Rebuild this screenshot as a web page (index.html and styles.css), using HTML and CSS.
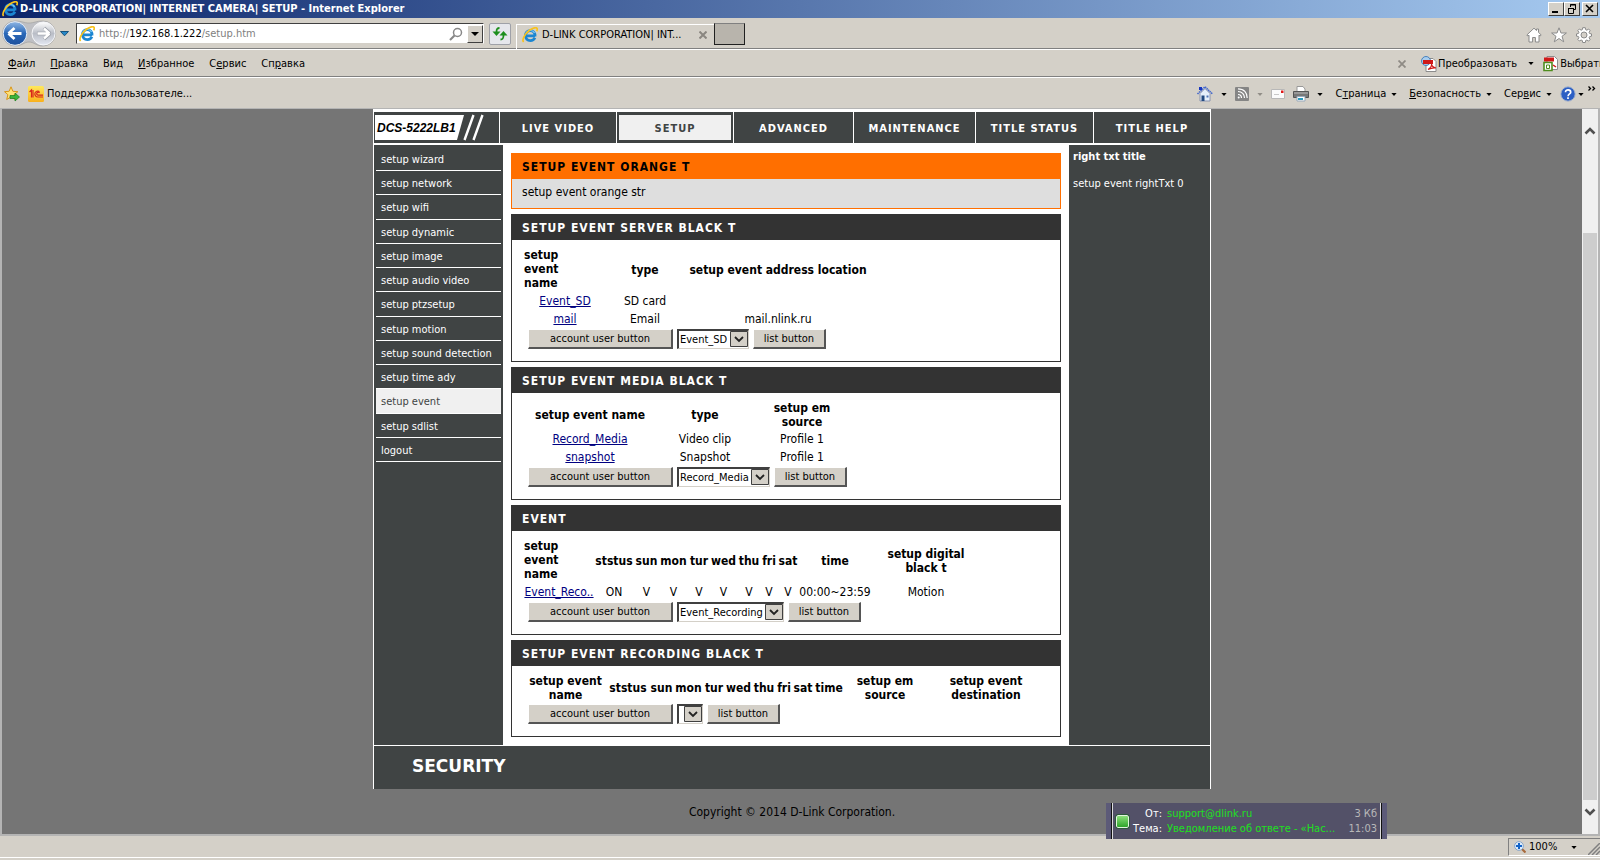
FILE: index.html
```html
<!DOCTYPE html>
<html lang="ru">
<head>
<meta charset="utf-8">
<title>D-LINK CORPORATION| INTERNET CAMERA| SETUP</title>
<link rel="stylesheet" href="styles.css">
</head>
<body>
<svg class="defs" aria-hidden="true">
  <linearGradient id="blue" x1="0" y1="0" x2="0" y2="1"><stop offset="0" stop-color="#8fb6e4"/><stop offset=".5" stop-color="#2a68b8"/><stop offset="1" stop-color="#1c4f9c"/></linearGradient>
  <linearGradient id="silver" x1="0" y1="0" x2="0" y2="1"><stop offset="0" stop-color="#ffffff"/><stop offset=".5" stop-color="#b9bdc6"/><stop offset="1" stop-color="#e4e8f2"/></linearGradient>
  <linearGradient id="gold" x1="0" y1="0" x2="0" y2="1"><stop offset="0" stop-color="#ffe85c"/><stop offset="1" stop-color="#f9b01c"/></linearGradient>
  <symbol id="ie" viewBox="0 0 16 16">
    <path d="M3.600 8.800h9.400M13 9.500C13.300 5.500 11.200 3.600 8.300 3.600 5.400 3.600 3.500 5.600 3.500 8.600c0 3 2 5 4.800 5 2.200 0 3.800-.9 4.600-2.800" fill="none" stroke="#1c86d1" stroke-width="2.800"/>
    <path d="M3.600 7.200C4.400 4.600 6.200 3.500 8.300 3.500c2 0 3.500.9 4.200 2.500" fill="none" stroke="#7cc8f4" stroke-width="1.200"/>
    <path d="M1.600 15C-.5 12.800 3 6.600 7.500 3.300 11 .8 14.600 0 15.200 1.600c.3.800 0 1.700-.6 2.700" fill="none" stroke="#f8c21c" stroke-width="1.700"/>
  </symbol>
  <symbol id="drop" viewBox="0 0 7 4"><path d="M0 0h7L3.500 4z" fill="currentColor"/></symbol>
</svg>

<div class="window">
  <header class="titlebar">
    <svg class="i16"><use href="#ie"/></svg>
    <h1 class="window-title">D-LINK CORPORATION| INTERNET CAMERA| SETUP - Internet Explorer</h1>
    <div class="window-controls">
      <button type="button" aria-label="Свернуть"><svg viewBox="0 0 12 10"><path d="M2 8h6" stroke="#000" stroke-width="2"/></svg></button>
      <button type="button" aria-label="Восстановить"><svg viewBox="0 0 12 10"><path d="M4.500 3V.5h5v5H7M4 1h6M2.500 4.500h5v5h-5zM2 4.500h6" fill="none" stroke="#000"/></svg></button>
      <button type="button" class="close" aria-label="Закрыть"><svg viewBox="0 0 12 10"><path d="M2 1l7 7M9 1L2 8" stroke="#000" stroke-width="1.600"/></svg></button>
    </div>
  </header>

  <div class="navbar">
    <div class="history">
      <svg viewBox="0 0 54 28" aria-hidden="true">
        <path d="M13 1C20 1 22 3 27 3s7-2 14-2a12 12 0 0 1 0 25c-7 0-9-4-14-4s-7 4-14 4A12 12 0 0 1 13 1z" fill="#bfc0c4" stroke="#9a9a9a" stroke-width=".6"/>
        <circle cx="13" cy="13.500" r="11.800" fill="url(#blue)" stroke="#e6edf6"/>
        <path d="M6.500 13.500L12.500 8M6.500 13.500l6 5.500M7 13.500h12.500" stroke="#fff" stroke-width="2.800" fill="none"/>
        <circle cx="41.500" cy="13.500" r="11.500" fill="url(#silver)" stroke="#f4f5f8"/>
        <path d="M48 13.500L42 8M48 13.500l-6 5.500M47.500 13.500H35" stroke="#989ca5" stroke-width="3.600" fill="none"/>
        <path d="M47.500 13.500L42 8.500M47.500 13.500l-5.500 5M47 13.500H35.500" stroke="#fff" stroke-width="2.400" fill="none"/>
      </svg>
      <svg class="history-drop" viewBox="0 0 10 7" aria-hidden="true"><path d="M.5 1.500h8L4.500 5.800z" fill="#2688c8" stroke="#17547e"/></svg>
    </div>
    <div class="address">
      <svg class="i16"><use href="#ie"/></svg>
      <div class="url">http://<b>192.168.1.222</b>/setup.htm</div>
      <svg class="search" viewBox="0 0 14 14" aria-hidden="true"><circle cx="8.500" cy="5.500" r="4" fill="none" stroke="#888" stroke-width="1.500"/><path d="M5.500 8.500L1 13" stroke="#888" stroke-width="2.200"/></svg>
      <button type="button" class="address-drop" aria-label="Адреса"><svg viewBox="0 0 8 4"><path d="M0 0h8L4 4z"/></svg></button>
    </div>
    <button type="button" class="refresh" aria-label="Обновить"><svg viewBox="0 0 16 16"><path d="M.5 5.500h8L4.500 10z" fill="#1d8f1d"/><path d="M7.500 2C5 2 4.500 3 4.500 6" fill="none" stroke="#1d8f1d" stroke-width="1.800"/><path d="M7.500 9.500h8L11.500 5z" fill="#1d8f1d"/><path d="M8.500 13.500c2.500 0 3-1 3-4.500" fill="none" stroke="#1d8f1d" stroke-width="1.800"/></svg></button>
    <div class="tab">
      <svg class="i16"><use href="#ie"/></svg>
      <span class="tab-name">D-LINK CORPORATION| INT...</span>
      <svg class="tab-close" viewBox="0 0 8 8" aria-hidden="true"><path d="M.5.5l7 7M7.500.5l-7 7" stroke="#8a8680" stroke-width="2"/></svg>
    </div>
    <button type="button" class="new-tab" aria-label="Новая вкладка"></button>
    <div class="tools">
      <svg viewBox="0 0 16 16" aria-hidden="true"><path d="M8 1.200L.8 8l1 1L3 8.200V15h3.600v-4.500h2.800V15H13V8.200l1.200.8 1-1L12.500 5.300V2h-2v1.500z" fill="#fff" stroke="#8a8a8a"/></svg>
      <svg viewBox="0 0 16 16" aria-hidden="true"><path d="M8 .8l2 5.200h5.400L11 9.300l1.700 5.500L8 11.500l-4.700 3.300L5 9.300.6 6H6z" fill="#fff" stroke="#8a8a8a"/></svg>
      <svg viewBox="0 0 16 16" aria-hidden="true"><path d="M6.700.7h2.600l.4 2 1.200.5L12.600 2l1.500 1.600-1 1.700.5 1.200 1.900.4v2.300l-1.900.4-.5 1.200 1 1.700-1.500 1.600-1.700-1.100-1.200.5-.4 2H6.700l-.4-2-1.200-.5L3.400 14l-1.600-1.600 1.100-1.700-.5-1.200-1.900-.4V6.900l1.900-.4.5-1.200-1.100-1.700L3.400 2l1.700 1.200 1.200-.5z" fill="#fff" stroke="#8a8a8a"/><circle cx="8" cy="8" r="3" fill="#d4d0c8" stroke="#8a8a8a"/></svg>
    </div>
  </div>

  <div class="menubar">
    <nav class="menus">
      <a href="#"><u>Ф</u>айл</a><a href="#"><u>П</u>равка</a><a href="#">Ви<u>д</u></a><a href="#"><u>И</u>збранное</a><a href="#">С<u>е</u>рвис</a><a href="#">Сп<u>р</u>авка</a>
    </nav>
    <div class="pdf-tools">
      <svg class="pdf-close" viewBox="0 0 8 8" aria-hidden="true"><path d="M.5.5l7 7M7.500.5l-7 7" stroke="#8f8b85" stroke-width="1.800"/></svg>
      <a href="#"><svg class="i16" viewBox="0 0 16 16"><path d="M5 2.500h7l3 3v10H5z" fill="#fff" stroke="#8c8c8c"/><circle cx="5" cy="5" r="4.500" fill="#a8cdee" stroke="#4880bb"/><path d="M2 4h10v4H2z" fill="#d01818"/><path d="M7 13.500c3-2 4-4 3.500-6 0 3 2 4 4.500 4.500-3-.5-5 0-8 1.500z" stroke="#d01818" stroke-width="1.200" fill="none"/></svg>Преобразовать</a>
      <svg class="drop"><use href="#drop"/></svg>
      <a href="#" class="pick"><svg class="i16" viewBox="0 0 16 16"><path d="M4 .5h7.500l3 3v10H4z" fill="#fff" stroke="#8c8c8c"/><path d="M1 1.500h10v4H1z" fill="#d01818"/><path d="M1 6.500h8v8H1z" fill="#fff" stroke="#4f8d1e" stroke-width="1.600"/><path d="M3.500 9h3v3.500h-3z" fill="#fff" stroke="#4f8d1e"/><path d="M10 9l3 2" stroke="#d01818" stroke-width="1.500"/></svg>Выбрать</a>
    </div>
  </div>

  <div class="commandbar">
    <div class="favorites">
      <svg class="i16" viewBox="0 0 16 16" aria-hidden="true"><path d="M7 .8l1.900 4.500 5 .4-3.800 3 1.200 4.800L7 11l-4.300 2.500 1.200-4.800-3.400-3 4.600-.4z" fill="#ffe27a" stroke="#d99518"/><path d="M6 9.500h5V7l4.500 4-4.500 4v-2.500H6z" fill="#3cb43c" stroke="#17801b" stroke-width=".7"/></svg>
      <a href="#"><svg class="i16" viewBox="0 0 16 16"><rect width="16" height="16" rx="1.500" fill="url(#gold)"/><path d="M1.500 6l2-2v7.500M5 11.500V4M11.500 5.500a3 3 0 1 0-1.500 5.500h5M11.500 7A1.500 1.500 0 1 0 10 9.200h5" fill="none" stroke="#d8261c" stroke-width="1.200"/></svg>Поддержка пользователе...</a>
    </div>
    <div class="commands">
      <svg class="i16" viewBox="0 0 16 16" aria-hidden="true"><path d="M3 7.500V15h10V7.500L8 2.500z" fill="#e6f0fb" stroke="#8a94b0"/><path d="M.5 8L8 .8 15.500 8" fill="none" stroke="#4267cc" stroke-width="1.600" stroke-dasharray="1.500 .6"/><path d="M2 1h3v3H2z" fill="#1736c0"/><path d="M4.500 9.500h3V15h-3z" fill="#234a80"/><path d="M9.500 9.500h2v2h-2z" fill="#4e74b4"/></svg>
      <svg class="drop"><use href="#drop"/></svg>
      <svg class="feed" viewBox="0 0 14 14" aria-hidden="true"><rect width="14" height="14" rx="1" fill="#858585"/><path d="M3 4.500c4 0 6.500 3 6.500 6.500M3 7.500c2.200 0 3.500 1.500 3.500 3.500M3 1.800c6 0 9.200 4 9.200 9.200" fill="none" stroke="#fff" stroke-width="1.200"/><circle cx="3.700" cy="10.500" r="1" fill="#fff"/></svg>
      <svg class="drop faded"><use href="#drop"/></svg>
      <svg class="mail" viewBox="0 0 14 10" aria-hidden="true"><path d="M.5.5h13v9H.5z" fill="#fbfbfb" stroke="#b8b8b8"/><path d="M10 1.500h2.500V4H10z" fill="#e01818"/><path d="M3 5.500h5" stroke="#c8c8c8"/></svg>
      <svg class="i16" viewBox="0 0 16 16" aria-hidden="true"><path d="M4 6V.5h6L12 3v3" fill="#fff" stroke="#999"/><path d="M.5 5.500h15v6H.5z" fill="#777" stroke="#555"/><path d="M1 7h14" stroke="#bbb"/><path d="M4 10.500h8v4.500H4z" fill="#fff" stroke="#9ab"/><path d="M5 12h5v2H5z" fill="#2a9cc0"/></svg>
      <svg class="drop"><use href="#drop"/></svg>
      <a href="#"><span>С<u>т</u>раница</span><svg class="drop"><use href="#drop"/></svg></a>
      <a href="#"><span><u>Б</u>езопасность</span><svg class="drop"><use href="#drop"/></svg></a>
      <a href="#"><span>Сер<u>в</u>ис</span><svg class="drop"><use href="#drop"/></svg></a>
      <a href="#" class="help" aria-label="Справка"><svg class="i16" viewBox="0 0 16 16"><circle cx="8" cy="8" r="7.200" fill="#2c5fc4" stroke="#a9b6cc"/><path d="M5.500 6.200c0-3.200 5.200-3 5.200 0 0 1.800-2.600 1.700-2.600 4M8 11.300v1.800" fill="none" stroke="#fff" stroke-width="1.700"/></svg><svg class="drop"><use href="#drop"/></svg></a>
      <svg class="more" viewBox="0 0 8 5" aria-hidden="true"><path d="M.5.5l2 2-2 2M4.500.5l2 2-2 2" fill="none" stroke="#000" stroke-width="1.300"/></svg>
    </div>
  </div>

  <div class="viewport">
    <div class="document">
      <main class="page">
        <nav class="top-nav">
          <div class="logo">
            <svg viewBox="0 0 112 31" aria-hidden="true"><path d="M1 3h89l-7 25H1z" fill="#fff"/><path d="M99.500 3l-9 25M108.500 3l-9 25" stroke="#fff" stroke-width="2.400"/></svg>
            <span class="model">DCS-5222LB1</span>
          </div>
          <a href="#">LIVE VIDEO</a>
          <a href="#" class="current">SETUP</a>
          <a href="#">ADVANCED</a>
          <a href="#">MAINTENANCE</a>
          <a href="#">TITLE STATUS</a>
          <a href="#">TITLE HELP</a>
        </nav>
        <div class="columns">
          <div class="side">
            <ul class="side-nav">
              <li><a href="#">setup wizard</a></li>
              <li><a href="#">setup network</a></li>
              <li><a href="#">setup wifi</a></li>
              <li><a href="#">setup dynamic</a></li>
              <li><a href="#">setup image</a></li>
              <li><a href="#">setup audio video</a></li>
              <li><a href="#">setup ptzsetup</a></li>
              <li><a href="#">setup motion</a></li>
              <li><a href="#">setup sound detection</a></li>
              <li><a href="#">setup time ady</a></li>
              <li><a href="#" class="current">setup event</a></li>
              <li><a href="#">setup sdlist</a></li>
              <li><a href="#">logout</a></li>
            </ul>
          </div>

          <div class="content">
            <section class="intro">
              <h2>SETUP EVENT ORANGE T</h2>
              <p>setup event orange str</p>
            </section>

            <section class="panel">
              <h2>SETUP EVENT SERVER BLACK T</h2>
              <div class="panel-body">
                <table class="server">
                  <colgroup><col class="c-name"><col class="c-type"><col class="c-address"></colgroup>
                  <tr><th class="stacked">setup<br>event<br>name</th><th>type</th><th>setup event address location</th></tr>
                  <tr><td><a href="#">Event_SD</a></td><td>SD card</td><td></td></tr>
                  <tr><td><a href="#">mail</a></td><td>Email</td><td>mail.nlink.ru</td></tr>
                </table>
                <div class="actions">
                  <button type="button" class="account">account user button</button>
                  <span class="picker"><select aria-label="Server"><option>Event_SD</option></select><svg viewBox="0 0 18 17" aria-hidden="true"><path d="M.5.5h17v15H.5z" fill="#d4d0c8" stroke="#404040"/><path d="M5 6l4 4 4-4" fill="none" stroke="#222" stroke-width="1.800"/></svg></span>
                  <button type="button" class="list">list button</button>
                </div>
              </div>
            </section>

            <section class="panel">
              <h2>SETUP EVENT MEDIA BLACK T</h2>
              <div class="panel-body">
                <table class="media">
                  <colgroup><col class="c-name"><col class="c-type"><col class="c-source"></colgroup>
                  <tr><th>setup event name</th><th>type</th><th>setup em<br>source</th></tr>
                  <tr><td><a href="#">Record_Media</a></td><td>Video clip</td><td>Profile 1</td></tr>
                  <tr><td><a href="#">snapshot</a></td><td>Snapshot</td><td>Profile 1</td></tr>
                </table>
                <div class="actions">
                  <button type="button" class="account">account user button</button>
                  <span class="picker"><select aria-label="Media"><option>Record_Media</option></select><svg viewBox="0 0 18 17" aria-hidden="true"><path d="M.5.5h17v15H.5z" fill="#d4d0c8" stroke="#404040"/><path d="M5 6l4 4 4-4" fill="none" stroke="#222" stroke-width="1.800"/></svg></span>
                  <button type="button" class="list">list button</button>
                </div>
              </div>
            </section>

            <section class="panel">
              <h2>EVENT</h2>
              <div class="panel-body">
                <table class="event">
                  <colgroup><col class="c-name"><col class="c-status"><col class="c-sun"><col class="c-mon"><col class="c-tur"><col class="c-wed"><col class="c-thu"><col class="c-fri"><col class="c-sat"><col class="c-time"><col class="c-trigger"></colgroup>
                  <tr><th class="stacked">setup<br>event<br>name</th><th>ststus</th><th>sun</th><th>mon</th><th>tur</th><th>wed</th><th>thu</th><th>fri</th><th>sat</th><th>time</th><th>setup digital<br>black t</th></tr>
                  <tr><td><a href="#">Event_Reco..</a></td><td>ON</td><td>V</td><td>V</td><td>V</td><td>V</td><td>V</td><td>V</td><td>V</td><td>00:00~23:59</td><td>Motion</td></tr>
                </table>
                <div class="actions">
                  <button type="button" class="account">account user button</button>
                  <span class="picker"><select aria-label="Event"><option>Event_Recording</option></select><svg viewBox="0 0 18 17" aria-hidden="true"><path d="M.5.5h17v15H.5z" fill="#d4d0c8" stroke="#404040"/><path d="M5 6l4 4 4-4" fill="none" stroke="#222" stroke-width="1.800"/></svg></span>
                  <button type="button" class="list">list button</button>
                </div>
              </div>
            </section>

            <section class="panel">
              <h2>SETUP EVENT RECORDING BLACK T</h2>
              <div class="panel-body">
                <table class="recording">
                  <colgroup><col class="c-name"><col class="c-status"><col class="c-sun"><col class="c-mon"><col class="c-tur"><col class="c-wed"><col class="c-thu"><col class="c-fri"><col class="c-sat"><col class="c-time"><col class="c-source"><col class="c-dest"></colgroup>
                  <tr><th>setup event<br>name</th><th>ststus</th><th>sun</th><th>mon</th><th>tur</th><th>wed</th><th>thu</th><th>fri</th><th>sat</th><th>time</th><th>setup em<br>source</th><th>setup event<br>destination</th></tr>
                </table>
                <div class="actions">
                  <button type="button" class="account">account user button</button>
                  <span class="picker"><select aria-label="Recording"><option></option></select><svg viewBox="0 0 18 17" aria-hidden="true"><path d="M.5.5h17v15H.5z" fill="#d4d0c8" stroke="#404040"/><path d="M5 6l4 4 4-4" fill="none" stroke="#222" stroke-width="1.800"/></svg></span>
                  <button type="button" class="list">list button</button>
                </div>
              </div>
            </section>
          </div>

          <aside class="help-text">
            <h2>right txt title</h2>
            <p>setup event rightTxt 0</p>
          </aside>
        </div>
        <footer class="brand">SECURITY</footer>
      </main>
      <p class="copyright">Copyright © 2014 D-Link Corporation.</p>
    </div>
    <div class="scrollbar" aria-hidden="true">
      <svg viewBox="0 0 14 9"><path d="M2.500 7.500L7 3l4.500 4.500" fill="none" stroke="#505050" stroke-width="2.600"/></svg>
      <div class="thumb"></div>
      <svg viewBox="0 0 14 9"><path d="M2.500 1.500L7 6l4.500-4.500" fill="none" stroke="#505050" stroke-width="2.600"/></svg>
    </div>
  </div>

  <div class="statusbar">
    <div class="zoom">
      <svg class="i12" viewBox="0 0 12 12" aria-hidden="true"><path d="M8 8l3.500 3.500" stroke="#a86a3c" stroke-width="2.200"/><circle cx="5" cy="5" r="4.400" fill="#dcebfa" stroke="#8aa6c8"/><path d="M5 2v6M2 5h6" stroke="#1464c8" stroke-width="2"/></svg>
      <span>100%</span>
      <svg class="drop"><use href="#drop"/></svg>
      <svg class="grip" viewBox="0 0 12 12" aria-hidden="true"><path d="M0 12L12 0M4 12l8-8M8 12l4-4" stroke="#808080" stroke-width="1.500"/></svg>
    </div>
  </div>

  <div class="toast" role="status">
    <i class="bullet"></i>
    <dl>
      <dt>От:</dt><dd>support@dlink.ru</dd><dd class="meta">3 Кб</dd>
      <dt>Тема:</dt><dd>Уведомление об ответе - «Нас...</dd><dd class="meta">11:03</dd>
    </dl>
  </div>
</div>
</body>
</html>
```
FILE: styles.css
```css
* { box-sizing: border-box; }

body {
  margin: 0;
  background: #d4d0c8;
  color: #000;
  font: 11px/14px "DejaVu Sans Condensed", Tahoma, "Noto Sans", sans-serif;
}

h1, h2, p, ul, dl, dd { margin: 0; padding: 0; }
a { color: inherit; text-decoration: none; }
button { font: inherit; color: inherit; padding: 0; }
svg { display: block; flex: none; }

.defs { position: absolute; width: 0; height: 0; }
.i16 { width: 16px; height: 16px; }
.i12 { width: 12px; height: 12px; }
.drop { width: 6px; height: 3px; }
.faded { color: #918d87; }

.window {
  display: flex;
  flex-direction: column;
  min-height: 100vh;
  overflow: hidden;
}

/* Title bar */
.titlebar {
  display: flex;
  align-items: center;
  height: 18px;
  padding: 0 2px;
  gap: 2px;
  background: linear-gradient(to right, #0a246a, #a6caf0);
  color: #fff;
}
.window-title { flex: 1; font-size: 11px; line-height: 16px; font-weight: bold; }
.window-controls { display: flex; }
.window-controls button {
  width: 16px;
  height: 14px;
  background: #d4d0c8;
  border: 1px solid;
  border-color: #fff #404040 #404040 #fff;
}
.window-controls svg { width: 12px; height: 10px; margin: auto; }
.window-controls .close { margin-left: 2px; }

/* Address row */
.navbar {
  display: flex;
  align-items: center;
  height: 32px;
  padding: 0 8px 0 2px;
  border-bottom: 1px solid #fff;
  box-shadow: inset 0 -1px #808080;
}
.history { display: flex; align-items: center; width: 74px; gap: 4px; }
.history > svg:first-child { width: 54px; height: 28px; }
.history-drop { width: 10px; height: 7px; }
.address {
  display: flex;
  align-items: center;
  flex: 0 1 408px;
  height: 21px;
  padding-left: 2px;
  gap: 4px;
  background: #fff;
  border: 1px solid;
  border-color: #404040 #fff #d4d0c8 #404040;
}
.url { flex: 1; color: #808080; }
.url b { color: #000; font-weight: normal; }
.search { width: 14px; height: 14px; }
.address-drop {
  display: grid;
  place-items: center;
  width: 16px;
  height: 18px;
  background: #d4d0c8;
  border: 1px solid;
  border-color: #fff #404040 #404040 #fff;
}
.address-drop svg { width: 8px; height: 4px; }
.refresh {
  display: grid;
  place-items: center;
  width: 22px;
  height: 22px;
  margin: 0 5px;
  background: #e6e7ec;
  border: 1px solid #9fa1a8;
  border-radius: 2px;
}
.refresh svg { width: 16px; height: 16px; }
.tab {
  display: flex;
  align-items: center;
  align-self: flex-end;
  width: 198px;
  height: 25px;
  padding: 0 7px 5px 5px;
  gap: 4px;
  border: 1px solid #fff;
  border-width: 1px 0 0 1px;
}
.tab-name { flex: 1; white-space: nowrap; }
.tab-close { width: 8px; height: 8px; }
.new-tab {
  width: 31px;
  height: 22px;
  background: #b8b4ac;
  border: 1px solid #202020;
  border-top-color: #808080;
}
.tools { display: flex; gap: 9px; margin-left: auto; padding-top: 2px; }
.tools svg { width: 16px; height: 16px; }

/* Menu row */
.menubar {
  display: flex;
  align-items: center;
  justify-content: space-between;
  height: 28px;
  padding-left: 8px;
  border-bottom: 1px solid #fff;
  box-shadow: inset 0 -1px #808080;
}
.menus { display: flex; gap: 15px; }
.pdf-tools { display: flex; align-items: center; width: 202px; white-space: nowrap; }
.pdf-tools a { display: flex; align-items: center; gap: 1px; }
.pdf-close { width: 8px; height: 8px; margin-right: 15px; }
.pdf-tools .drop { margin: 0 9px 0 11px; }

/* Command row */
.commandbar {
  display: flex;
  align-items: center;
  justify-content: space-between;
  height: 30px;
  padding: 2px 4px 0;
}
.favorites, .favorites a { display: flex; align-items: center; gap: 3px; }
.favorites { gap: 8px; }
.commands { display: flex; align-items: center; gap: 8px; }
.commands a { display: flex; align-items: center; gap: 5px; margin-left: 4px; }
.commands .help { gap: 2px; margin-left: 0; }
.commands .more { margin-left: -4px; }
.mail { width: 14px; height: 10px; }
.feed { width: 14px; height: 14px; }
.more { width: 8px; height: 5px; align-self: flex-start; }

/* Document area */
.viewport {
  display: flex;
  flex: 1;
  border: 2px solid #b4b4b4;
  border-width: 1px 2px 2px;
  background: #757575;
}
.document { flex: 1; display: flex; flex-direction: column; align-items: center; }
.scrollbar {
  display: flex;
  flex-direction: column;
  width: 16px;
  padding: 17px 1px;
  background: #f0f0f0;
}
.scrollbar svg { width: 14px; height: 9px; }
.thumb { flex: 1; margin: 98px 0 8px; background: #cdcdcd; }

.page {
  width: 100%;
  max-width: 838px;
  padding: 3px 1px 0;
  background: #fff;
  font-size: 12px;
}

.top-nav {
  display: grid;
  grid-template-columns: 125fr 116fr 116fr 119fr 121fr 117fr 116fr;
  gap: 1px;
  height: 31px;
}
.top-nav > * { display: flex; align-items: center; justify-content: center; background: #404444; }
.top-nav a { padding-top: 2px; color: #fff; font-size: 11px; font-weight: bold; letter-spacing: 1px; }
.top-nav .current { background: #f0f0f0; color: #404444; border: solid #404444; border-width: 3px 2px; }
.top-nav .logo { position: relative; justify-content: flex-start; }
.logo svg { width: 112px; height: 31px; }
.model {
  position: absolute;
  left: 3px;
  font: italic bold 12px/16px "Liberation Sans", Arial, sans-serif;
}

.columns {
  display: grid;
  grid-template-columns: 129px 1fr 141px;
  margin: 2px 0 1px;
}
.side { padding: 2px; background: #404444; }
.side-nav {
  display: grid;
  grid-auto-rows: 1fr;
  min-height: 315px;
  list-style: none;
}
.side-nav a {
  display: block;
  height: 100%;
  padding: 6px 5px 0;
  border-bottom: 1px solid #fff;
  color: #fff;
  font-size: 11px;
}
.side-nav .current { background: #f0f0f0; color: #404444; }

.content { display: flex; flex-direction: column; gap: 5px; padding: 8px; }
.content h2 {
  height: 25px;
  padding: 0 10px;
  font-size: 12px;
  line-height: 26px;
  letter-spacing: 1px;
}
.intro { background: #dedede; border: 1px solid #ff6f00; }
.intro h2 { background: #ff6f00; }
.intro p { padding: 6px 10px 9px; line-height: 14px; }
.panel { border: 1px solid #333; }
.panel h2 { background: #333; color: #fff; }
.panel-body { padding: 8px 12px 12px; }
.panel table { table-layout: fixed; width: 0; border-collapse: collapse; line-height: 14px; }
.panel th, .panel td { padding: 0; text-align: center; white-space: nowrap; }
.panel th { padding-bottom: 1px; }
.panel th.stacked { padding-bottom: 2px; text-align: left; }
.panel td { height: 18px; }
.panel td a { color: #000080; text-decoration: underline; }

.server .c-name { width: 82px; }
.server .c-type { width: 78px; }
.server .c-address { width: 188px; }
.media .c-name { width: 132px; }
.media .c-type { width: 98px; }
.media .c-source { width: 96px; }
.c-name { width: 70px; }
.c-status { width: 40px; }
.c-sun { width: 25px; }
.c-mon { width: 29px; }
.c-tur { width: 22px; }
.c-wed { width: 27px; }
.c-thu { width: 24px; }
.c-fri { width: 16px; }
.c-sat { width: 22px; }
.c-time { width: 72px; }
.c-trigger { width: 110px; }
.recording .c-name { width: 83px; }
.recording .c-status { width: 42px; }
.recording .c-time { width: 30px; }
.recording .c-source { width: 82px; }
.recording .c-dest { width: 120px; }

.actions { display: flex; gap: 4px; padding: 1px 0 0 4px; font-size: 11px; }
.actions button {
  height: 20px;
  background: #d4d0c8;
  border: solid;
  border-width: 1px 2px 2px 1px;
  border-color: #fff #555 #555 #fff;
}
.actions .account { width: 145px; }
.actions .list { width: 73px; }
.picker { position: relative; display: flex; }
.picker select {
  appearance: none;
  min-width: 26px;
  height: 20px;
  margin: 0;
  padding: 0 20px 0 1px;
  background: #fff;
  border: 1px solid;
  border-width: 2px 1px 1px 2px;
  border-color: #404040 #d4d0c8 #d4d0c8 #404040;
  border-radius: 0;
  font: inherit;
  color: inherit;
}
.picker svg { position: absolute; top: 2px; right: 1px; width: 18px; height: 17px; pointer-events: none; }

.help-text { padding: 5px 4px; background: #404444; color: #fff; font-size: 11px; }
.help-text h2 { font-size: 11px; line-height: 14px; margin-bottom: 13px; }

.brand {
  height: 43px;
  padding: 0 38px;
  background: #404444;
  color: #fff;
  font: bold 17px/40px "DejaVu Sans", sans-serif;
}
.copyright { padding: 16px 0 0; font-size: 12px; }

/* Status row */
.statusbar {
  display: flex;
  justify-content: flex-end;
  height: 24px;
  padding: 2px 0 4px;
  box-shadow: inset 0 -2px #d4d0c8, inset 0 -3px #fff;
}
.zoom {
  display: flex;
  align-items: center;
  width: 92px;
  padding-left: 5px;
  gap: 3px;
  border: 1px solid #808080;
  border-right: 0;
  border-bottom-color: #fff;
}
.zoom .drop { margin-left: 11px; }
.zoom .grip { width: 12px; height: 12px; margin-left: auto; align-self: flex-end; }

/* Mail notification over the page */
.toast {
  position: absolute;
  right: 213px;
  bottom: 21px;
  display: flex;
  align-items: center;
  gap: 4px;
  width: 281px;
  height: 36px;
  padding: 0 5px;
  background: #535168;
  border: solid #5c5a78;
  border-width: 0 5px;
  box-shadow: inset 1px 0 #111, inset 2px 0 #ddd, inset -1px 0 #111, inset -2px 0 #ddd;
}
.bullet {
  flex: none;
  width: 13px;
  height: 13px;
  background: linear-gradient(#8be07a, #2fa52b);
  border: 1px solid #e2f5de;
  border-radius: 2px;
  outline: 1px solid #2c5a3a;
}
.toast dl {
  display: grid;
  grid-template-columns: auto 1fr auto;
  flex: 1;
  column-gap: 5px;
  line-height: 15px;
  white-space: nowrap;
}
.toast dt { color: #fff; text-align: right; }
.toast dd { color: #1ee01e; }
.toast .meta { color: #b8b8b8; text-align: right; }
```
